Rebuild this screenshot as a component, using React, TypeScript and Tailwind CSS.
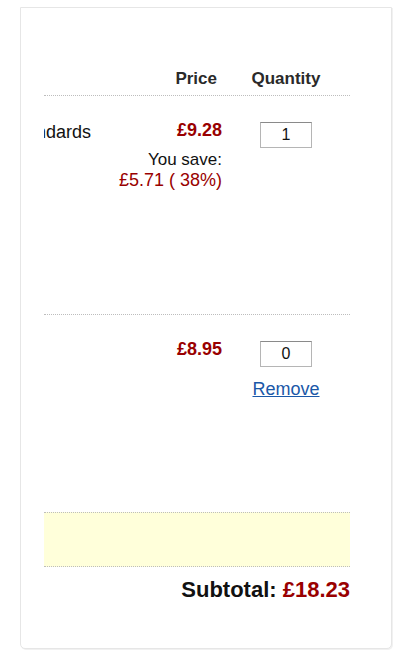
import React from 'react'

const FONT = { fontFamily: '"Liberation Sans", Arial, sans-serif' }

function QtyBox({ value }: { value: string }) {
  return (
    <div className="flex h-[26px] w-[52px] items-center justify-center border border-[#b5b5b5] border-t-[#8a8a8a] bg-white text-[16px] leading-none text-[#111]">
      {value}
    </div>
  )
}

export default function App() {
  return (
    <div className="min-h-[654px] bg-white pt-[7px] pl-[20px]" style={FONT}>
      <div className="h-[642px] w-[372px] rounded-b-[5px] border border-[#e6e6e6] bg-white pl-[23px] shadow-[1px_1px_0_#f1f1f1]">
        <div className="w-[306px]">
          {/* column headings */}
          <div className="flex border-b border-dotted border-[#bdbdbd] pt-[61px] pb-[6px] text-[17px] leading-[20px] font-bold text-[#2a2a2a]">
            <div className="w-[68px]" />
            <div className="w-[110px] pr-[5px] text-right">Price</div>
            <div className="ml-[28px] w-[72px] text-center">Quantity</div>
          </div>

          {/* item 1 — title is cut off by the narrow column, as on the page */}
          <div className="flex h-[219px] border-b border-dotted border-[#bdbdbd]">
            <div className="w-[68px] overflow-hidden pt-[25px]">
              <span className="-ml-[35px] block text-[18px] leading-[22px] whitespace-nowrap text-[#111]">
                Standards
              </span>
            </div>
            <div className="w-[110px] pt-[23px] text-right">
              <div className="text-[18px] leading-[22px] font-bold text-[#990000]">£9.28</div>
              <div className="mt-[8px] text-[17px] leading-[21px] text-[#111]">You save:</div>
              <div className="text-[18px] leading-[21px] whitespace-nowrap text-[#990000]">£5.71 ( 38%)</div>
            </div>
            <div className="ml-[28px] flex w-[72px] flex-col items-center pt-[26px]">
              <QtyBox value="1" />
            </div>
          </div>

          {/* item 2 */}
          <div className="flex h-[197px]">
            <div className="w-[68px]" />
            <div className="w-[110px] pt-[23px] text-right">
              <div className="text-[18px] leading-[22px] font-bold text-[#990000]">£8.95</div>
            </div>
            <div className="ml-[28px] flex w-[72px] flex-col items-center pt-[26px]">
              <QtyBox value="0" />
              <a href="#" className="mt-[11px] text-[18px] leading-[22px] text-[#1a58a8] underline">
                Remove
              </a>
            </div>
          </div>

          {/* promo strip */}
          <div className="h-[55px] border-y border-dotted border-[#bdbdbd] bg-[#ffffda]" />

          <div className="mt-[10px] text-right text-[22px] leading-[26px] font-bold text-[#111]">
            Subtotal: <span className="text-[#990000]">£18.23</span>
          </div>
        </div>
      </div>
    </div>
  )
}
